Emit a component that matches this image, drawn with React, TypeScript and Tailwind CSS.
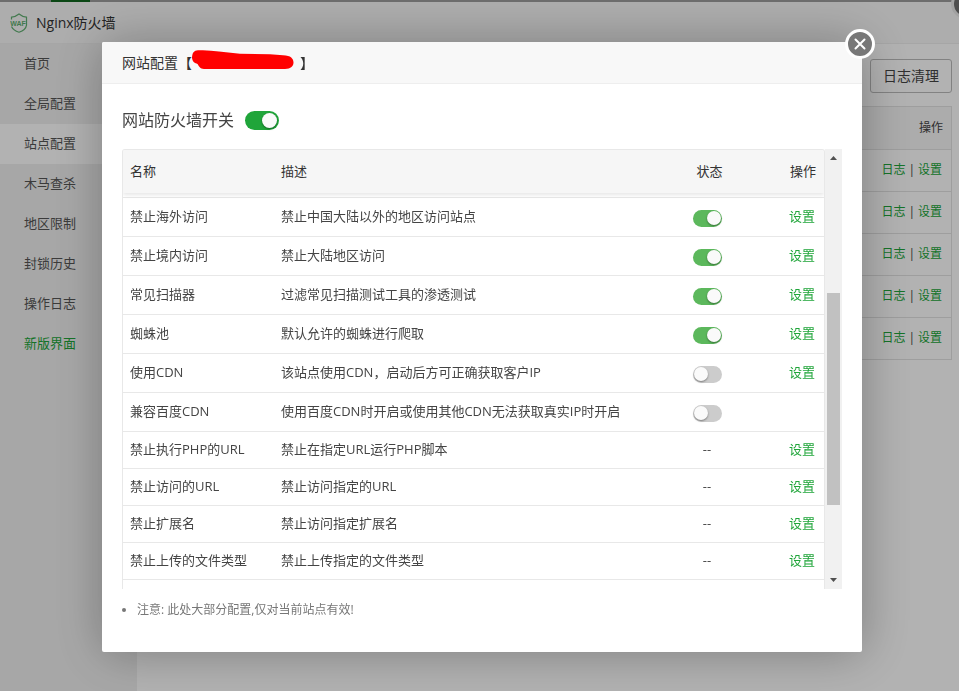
import { useState } from "react";

type Rule = {
  name: string;
  desc: string;
  enabled?: boolean;
  config: boolean;
};

const NAV = ["首页", "全局配置", "站点配置", "木马查杀", "地区限制", "封锁历史", "操作日志", "新版界面"];

const RULES: Rule[] = [
  { name: "禁止海外访问", desc: "禁止中国大陆以外的地区访问站点", enabled: true, config: true },
  { name: "禁止境内访问", desc: "禁止大陆地区访问", enabled: true, config: true },
  { name: "常见扫描器", desc: "过滤常见扫描测试工具的渗透测试", enabled: true, config: true },
  { name: "蜘蛛池", desc: "默认允许的蜘蛛进行爬取", enabled: true, config: true },
  { name: "使用CDN", desc: "该站点使用CDN，启动后方可正确获取客户IP", enabled: false, config: true },
  { name: "兼容百度CDN", desc: "使用百度CDN时开启或使用其他CDN无法获取真实IP时开启", enabled: false, config: false },
  { name: "禁止执行PHP的URL", desc: "禁止在指定URL运行PHP脚本", config: true },
  { name: "禁止访问的URL", desc: "禁止访问指定的URL", config: true },
  { name: "禁止扩展名", desc: "禁止访问指定扩展名", config: true },
  { name: "禁止上传的文件类型", desc: "禁止上传指定的文件类型", config: true },
];

function ShieldLogo() {
  return (
    <svg width="18" height="20" viewBox="0 0 18 20" fill="none" aria-hidden="true">
      <path
        d="M1.500 6.500V4.200C4.500 4 7 2.600 9 1c2 1.600 4.500 3 7.500 3.200v8C16 15.800 13 18 9 19.200c-4-1.200-6.500-3.400-7.500-5.700"
        stroke="#5fae70"
        strokeWidth="1.200"
      />
      <text x="8" y="12.500" textAnchor="middle" fontSize="7" fontWeight="700" fill="#5fae70" fontFamily="Liberation Sans, sans-serif">
        WAF
      </text>
    </svg>
  );
}

function Sidebar() {
  return (
    <nav className="w-[137px] shrink-0 bg-[#f0f0f0]">
      {NAV.map((item) => (
        <a
          key={item}
          href="#"
          className={
            item === "站点配置"
              ? "flex h-10 items-center bg-white pl-6 text-[13px] text-[#555]"
              : item === "新版界面"
                ? "flex h-10 items-center pl-6 text-[13px] text-[#20a53a]"
                : "flex h-10 items-center pl-6 text-[13px] text-[#555]"
          }
        >
          {item}
        </a>
      ))}
    </nav>
  );
}

function SiteList() {
  return (
    <main className="flex flex-1 flex-col items-end bg-white pt-[15px] pr-[7px] pl-5">
      <button type="button" className="h-[34px] w-[82px] rounded-[3px] border border-[#bbb] text-sm text-[#444]">
        日志清理
      </button>
      <table className="mt-[13px] w-full border-separate border-spacing-0 border-x border-t border-[#e2e2e2] text-right text-xs">
        <thead>
          <tr>
            <th className="h-[43px] border-b border-[#e2e2e2] bg-[#f6f6f6] pr-2 font-normal text-[#444]">操作</th>
          </tr>
        </thead>
        <tbody>
          {[1, 2, 3, 4, 5].map((id) => (
            <tr key={id}>
              <td className="h-[42px] border-b border-[#e2e2e2] pr-[9px] pb-px text-[#444]">
                <span className="inline-flex gap-[3px]">
                  <a href="#" className="text-[#20a53a]">日志</a>|<a href="#" className="text-[#20a53a]">设置</a>
                </span>
              </td>
            </tr>
          ))}
        </tbody>
      </table>
    </main>
  );
}

function RuleSwitch({ label, initial }: { label: string; initial: boolean }) {
  const [on, setOn] = useState(initial);
  return (
    <input
      type="checkbox"
      aria-label={label}
      checked={on}
      onChange={() => setOn(!on)}
      className="mx-auto mt-[2px] flex h-[17px] w-[29px] cursor-pointer appearance-none items-center rounded-full bg-[#ccc] px-px before:size-[14px] before:rounded-full before:bg-[#fafafa] before:shadow-[0_1px_2px_rgba(0,0,0,0.4)] before:content-[''] checked:justify-end checked:bg-[#5cb85c]"
    />
  );
}

function RuleTable() {
  return (
    <div className="mt-4 flex h-[440px]">
      <div className="flex-1 overflow-hidden rounded-t-[3px] border-x border-t border-[#e8e8e8]">
        <table className="w-full table-fixed border-separate border-spacing-0 text-left text-[13px] text-[#444]">
          <colgroup>
            <col className="w-[150px]" />
            <col />
            <col className="w-[100px]" />
            <col className="w-[67px]" />
          </colgroup>
          <thead className="relative shadow-[0_2px_4px_rgba(0,0,0,0.1)]">
            <tr className="bg-[#f6f6f6] text-[#333]">
              <th className="h-[43px] pl-[7px] font-normal">名称</th>
              <th className="pl-2 font-normal">描述</th>
              <th className="pl-[5px] text-center font-normal">状态</th>
              <th className="pr-2 text-right font-normal">操作</th>
            </tr>
          </thead>
          <tbody>
            <tr>
              <td colSpan={4} className="h-[5px] border-b border-[#e8e8e8]" />
            </tr>
            {RULES.map((rule) => {
              const hasSwitch = rule.enabled !== undefined;
              return (
                <tr key={rule.name} className={hasSwitch ? "h-[39px]" : "h-[37px]"}>
                  <td className="border-b border-[#e8e8e8] pl-[7px] whitespace-nowrap">{rule.name}</td>
                  <td className="border-b border-[#e8e8e8] pl-2 whitespace-nowrap">{rule.desc}</td>
                  <td className="border-b border-[#e8e8e8] text-center">
                    {rule.enabled !== undefined ? <RuleSwitch label={rule.name} initial={rule.enabled} /> : "--"}
                  </td>
                  <td className="border-b border-[#e8e8e8] pr-[9px] text-right">
                    {rule.config && <a href="#" className="text-[#20a53a]">设置</a>}
                  </td>
                </tr>
              );
            })}
          </tbody>
        </table>
      </div>
      {/* scrollbar */}
      <div className="flex w-[17px] flex-col items-center bg-[#f1f1f1]" aria-hidden="true">
        <svg width="17" height="17" viewBox="0 0 17 17">
          <path d="M5 11h7L8.500 7z" fill="#505050" />
        </svg>
        <div className="mt-[127px] h-[212px] w-[13px] bg-[#c1c1c1]" />
        <svg className="mt-auto" width="17" height="17" viewBox="0 0 17 17">
          <path d="M5 6h7L8.500 10z" fill="#505050" />
        </svg>
      </div>
    </div>
  );
}

function CloseIcon() {
  return (
    <svg width="12" height="12" viewBox="0 0 12 12" aria-hidden="true">
      <path d="M1.500 1.500l9 9M10.500 1.500l-9 9" stroke="#fff" strokeWidth="2" strokeLinecap="round" />
    </svg>
  );
}

function SiteDialog() {
  return (
    <div className="fixed inset-0 flex items-center justify-center bg-black/30 pt-[3px] pl-[5px]">
      <section
        role="dialog"
        aria-label="网站配置"
        className="relative w-full max-w-[760px] rounded-xs bg-white shadow-[1px_1px_50px_rgba(0,0,0,0.3)]"
      >
        <header className="flex h-[42px] items-center rounded-t-xs border-b border-[#eee] bg-[#f8f8f8] pl-5 text-sm text-[#333]">
          <span>网站配置【</span>
          <svg className="-mt-1.5" width="102" height="20" viewBox="0 0 102 20" aria-hidden="true">
            <path
              d="M0 8C0 3 2 .5 6 .3 13-.2 20 .5 27 1.500L48 3.700 78 4.200 91 5.300C99 5.300 101.500 9 101.500 12.500S99 18.800 93 19H12C8 19 7 16 5.500 14 3 13 .5 12 0 8z"
              fill="#f00"
            />
          </svg>
          <span className="ml-1.5">】</span>
        </header>
        <button
          type="button"
          aria-label="关闭"
          className="absolute -top-[13px] -right-[13px] flex size-[30px] items-center justify-center rounded-full border-3 border-white bg-[#787878]"
        >
          <CloseIcon />
        </button>
        <div className="px-5 pt-[23px] pb-[32px]">
          <label className="flex h-[26px] items-center gap-[11px] text-base text-[#444]">
            网站防火墙开关
            <input
              type="checkbox"
              defaultChecked
              className="flex h-[19px] w-[34px] cursor-pointer appearance-none items-center rounded-full bg-[#ccc] px-[2px] before:size-[15px] before:rounded-full before:bg-[#fafafa] before:shadow-[0_1px_2px_rgba(0,0,0,0.4)] before:content-[''] checked:justify-end checked:bg-[#20a53a]"
            />
          </label>
          <RuleTable />
          <ul className="mt-[11px] text-xs leading-5 text-[#777]">
            <li className="flex items-center gap-[11px]">
              <span className="size-1 rounded-full bg-[#777]" />
              注意: 此处大部分配置,仅对当前站点有效!
            </li>
          </ul>
        </div>
      </section>
    </div>
  );
}

export default function App() {
  return (
    <div className="relative flex min-h-screen flex-col overflow-hidden bg-white font-['Open_Sans','Noto_Sans_CJK_SC',sans-serif]">
      <div className="h-[2px] bg-[#9d9d9d] pl-[51px]">
        <div className="h-full w-[39px] bg-[#10661f]" />
      </div>
      <header className="flex h-[42px] items-center gap-2 border-b border-[#eee] bg-[#f8f8f8] pl-[10px] text-sm text-[#333]">
        <ShieldLogo />
        <h1>Nginx防火墙</h1>
      </header>
      <div className="flex flex-1">
        <Sidebar />
        <SiteList />
      </div>
      <button
        type="button"
        aria-label="关闭窗口"
        className="absolute -top-[11px] -right-[22px] size-[30px] rounded-full border-3 border-[#e8e8e8] bg-[#707070]"
      />
      <SiteDialog />
    </div>
  );
}
